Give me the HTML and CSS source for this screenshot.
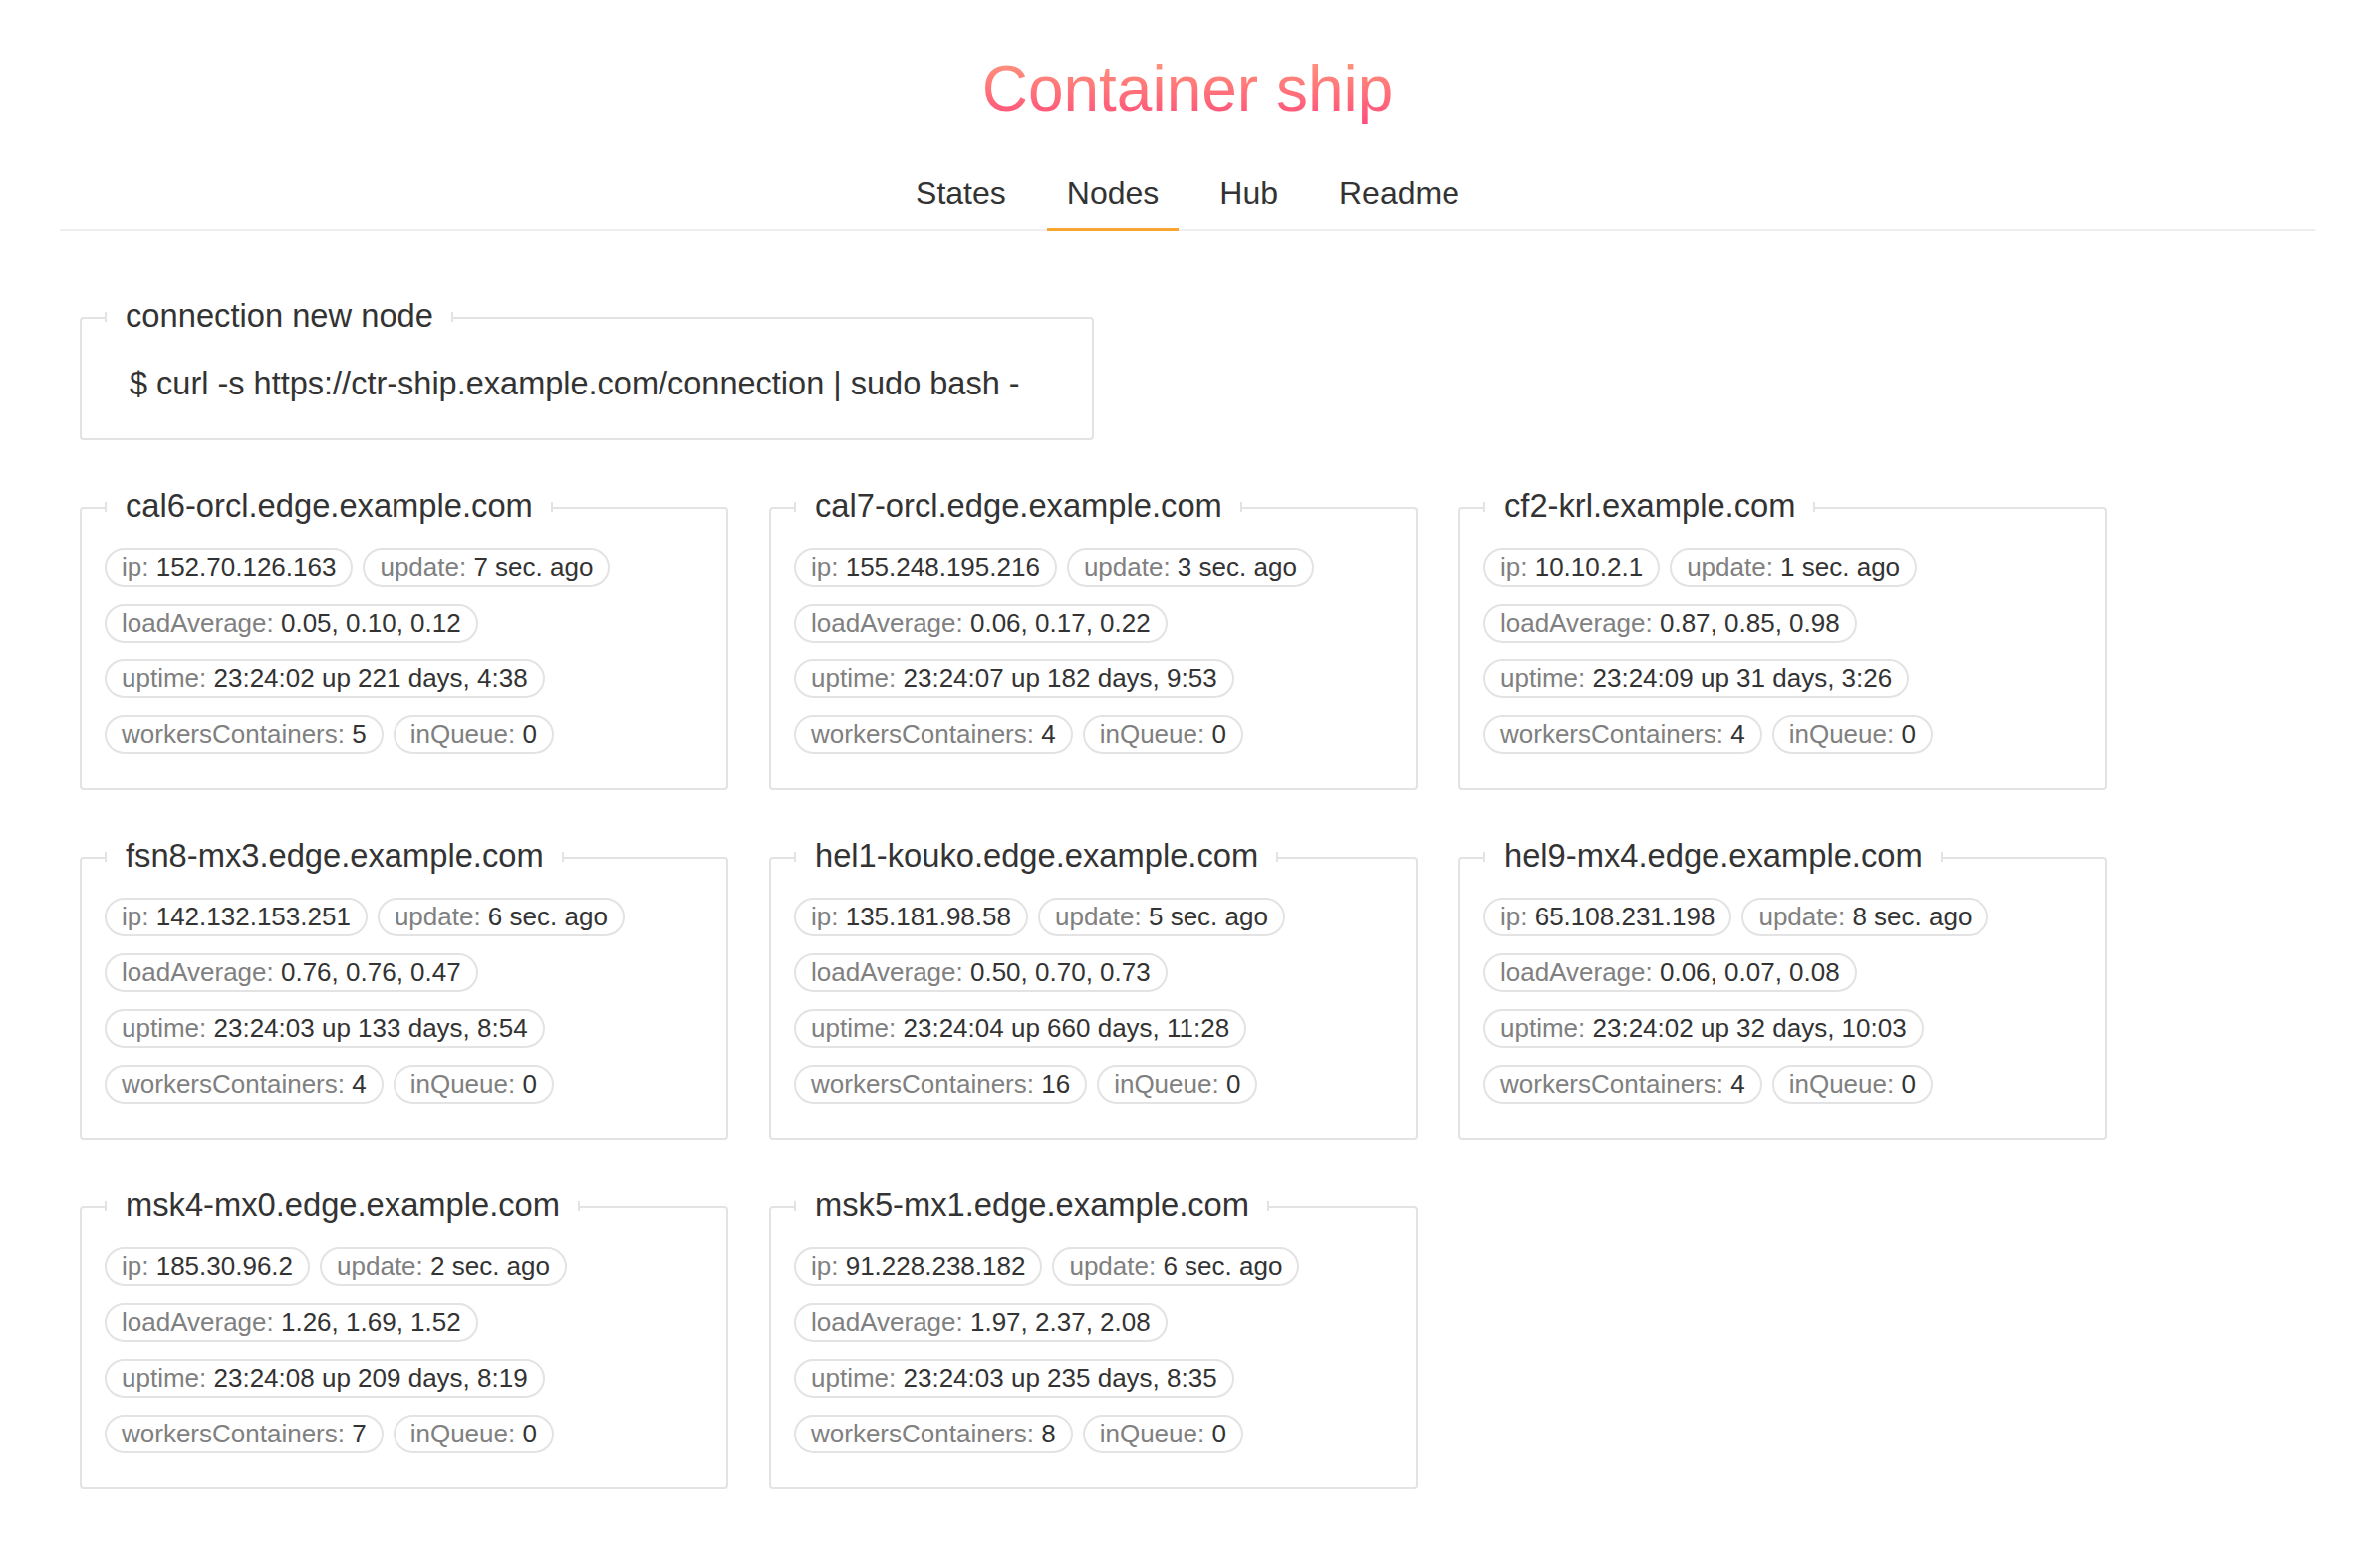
FILE: index.html
```html
<!DOCTYPE html>
<html lang="en">
<head>
<meta charset="utf-8">
<title>Container ship</title>
<link rel="stylesheet" href="styles.css">
</head>
<body>
<header class="header">
  <h1 class="title"><span class="title-text">Container ship</span></h1>
  <nav class="tabs">
    <a class="tab" href="#">States</a>
    <a class="tab tab-active" href="#">Nodes</a>
    <a class="tab" href="#">Hub</a>
    <a class="tab" href="#">Readme</a>
  </nav>
</header>
<main class="main">
  <fieldset class="box connection">
    <legend class="legend">connection new node</legend>
    <p class="command">$ curl -s https://ctr-ship.example.com/connection | sudo bash -</p>
  </fieldset>

  <div class="nodes">
    <fieldset class="box node">
      <legend class="legend">cal6-orcl.edge.example.com</legend>
      <div class="pills">
        <div class="pill-row"><span class="pill"><span class="k">ip:</span> 152.70.126.163</span><span class="pill"><span class="k">update:</span> 7 sec. ago</span></div>
        <div class="pill-row"><span class="pill"><span class="k">loadAverage:</span> 0.05, 0.10, 0.12</span></div>
        <div class="pill-row"><span class="pill"><span class="k">uptime:</span> 23:24:02 up 221 days, 4:38</span></div>
        <div class="pill-row"><span class="pill"><span class="k">workersContainers:</span> 5</span><span class="pill"><span class="k">inQueue:</span> 0</span></div>
      </div>
    </fieldset>
    <fieldset class="box node">
      <legend class="legend">cal7-orcl.edge.example.com</legend>
      <div class="pills">
        <div class="pill-row"><span class="pill"><span class="k">ip:</span> 155.248.195.216</span><span class="pill"><span class="k">update:</span> 3 sec. ago</span></div>
        <div class="pill-row"><span class="pill"><span class="k">loadAverage:</span> 0.06, 0.17, 0.22</span></div>
        <div class="pill-row"><span class="pill"><span class="k">uptime:</span> 23:24:07 up 182 days, 9:53</span></div>
        <div class="pill-row"><span class="pill"><span class="k">workersContainers:</span> 4</span><span class="pill"><span class="k">inQueue:</span> 0</span></div>
      </div>
    </fieldset>
    <fieldset class="box node">
      <legend class="legend">cf2-krl.example.com</legend>
      <div class="pills">
        <div class="pill-row"><span class="pill"><span class="k">ip:</span> 10.10.2.1</span><span class="pill"><span class="k">update:</span> 1 sec. ago</span></div>
        <div class="pill-row"><span class="pill"><span class="k">loadAverage:</span> 0.87, 0.85, 0.98</span></div>
        <div class="pill-row"><span class="pill"><span class="k">uptime:</span> 23:24:09 up 31 days, 3:26</span></div>
        <div class="pill-row"><span class="pill"><span class="k">workersContainers:</span> 4</span><span class="pill"><span class="k">inQueue:</span> 0</span></div>
      </div>
    </fieldset>
    <fieldset class="box node">
      <legend class="legend">fsn8-mx3.edge.example.com</legend>
      <div class="pills">
        <div class="pill-row"><span class="pill"><span class="k">ip:</span> 142.132.153.251</span><span class="pill"><span class="k">update:</span> 6 sec. ago</span></div>
        <div class="pill-row"><span class="pill"><span class="k">loadAverage:</span> 0.76, 0.76, 0.47</span></div>
        <div class="pill-row"><span class="pill"><span class="k">uptime:</span> 23:24:03 up 133 days, 8:54</span></div>
        <div class="pill-row"><span class="pill"><span class="k">workersContainers:</span> 4</span><span class="pill"><span class="k">inQueue:</span> 0</span></div>
      </div>
    </fieldset>
    <fieldset class="box node">
      <legend class="legend">hel1-kouko.edge.example.com</legend>
      <div class="pills">
        <div class="pill-row"><span class="pill"><span class="k">ip:</span> 135.181.98.58</span><span class="pill"><span class="k">update:</span> 5 sec. ago</span></div>
        <div class="pill-row"><span class="pill"><span class="k">loadAverage:</span> 0.50, 0.70, 0.73</span></div>
        <div class="pill-row"><span class="pill"><span class="k">uptime:</span> 23:24:04 up 660 days, 11:28</span></div>
        <div class="pill-row"><span class="pill"><span class="k">workersContainers:</span> 16</span><span class="pill"><span class="k">inQueue:</span> 0</span></div>
      </div>
    </fieldset>
    <fieldset class="box node">
      <legend class="legend">hel9-mx4.edge.example.com</legend>
      <div class="pills">
        <div class="pill-row"><span class="pill"><span class="k">ip:</span> 65.108.231.198</span><span class="pill"><span class="k">update:</span> 8 sec. ago</span></div>
        <div class="pill-row"><span class="pill"><span class="k">loadAverage:</span> 0.06, 0.07, 0.08</span></div>
        <div class="pill-row"><span class="pill"><span class="k">uptime:</span> 23:24:02 up 32 days, 10:03</span></div>
        <div class="pill-row"><span class="pill"><span class="k">workersContainers:</span> 4</span><span class="pill"><span class="k">inQueue:</span> 0</span></div>
      </div>
    </fieldset>
    <fieldset class="box node">
      <legend class="legend">msk4-mx0.edge.example.com</legend>
      <div class="pills">
        <div class="pill-row"><span class="pill"><span class="k">ip:</span> 185.30.96.2</span><span class="pill"><span class="k">update:</span> 2 sec. ago</span></div>
        <div class="pill-row"><span class="pill"><span class="k">loadAverage:</span> 1.26, 1.69, 1.52</span></div>
        <div class="pill-row"><span class="pill"><span class="k">uptime:</span> 23:24:08 up 209 days, 8:19</span></div>
        <div class="pill-row"><span class="pill"><span class="k">workersContainers:</span> 7</span><span class="pill"><span class="k">inQueue:</span> 0</span></div>
      </div>
    </fieldset>
    <fieldset class="box node">
      <legend class="legend">msk5-mx1.edge.example.com</legend>
      <div class="pills">
        <div class="pill-row"><span class="pill"><span class="k">ip:</span> 91.228.238.182</span><span class="pill"><span class="k">update:</span> 6 sec. ago</span></div>
        <div class="pill-row"><span class="pill"><span class="k">loadAverage:</span> 1.97, 2.37, 2.08</span></div>
        <div class="pill-row"><span class="pill"><span class="k">uptime:</span> 23:24:03 up 235 days, 8:35</span></div>
        <div class="pill-row"><span class="pill"><span class="k">workersContainers:</span> 8</span><span class="pill"><span class="k">inQueue:</span> 0</span></div>
      </div>
    </fieldset>
  </div>
</main>
</body>
</html>
```

FILE: styles.css
```css
* { box-sizing: border-box; }

body {
  margin: 0;
  background: #ffffff;
  color: #333333;
  font-family: "Liberation Sans", Arial, Helvetica, sans-serif;
}

.header {
  display: flex;
  flex-direction: column;
}

.title {
  margin: 53px 0 0;
  text-align: center;
  font-size: 64px;
  line-height: 72px;
  font-weight: normal;
}

.title-text {
  display: inline-block;
  background: linear-gradient(to bottom, #ff9d7e 0%, #ff7479 50%, #ff4b7c 100%);
  -webkit-background-clip: text;
  background-clip: text;
  color: transparent;
}

.tabs {
  margin: 51px 60px 0;
  display: flex;
  justify-content: center;
  gap: 21px;
  border-bottom: 2px solid #eeeeee;
}

.tab {
  display: block;
  padding: 0 20px 17px;
  margin-bottom: -2px;
  font-size: 32px;
  line-height: 36px;
  color: #333333;
  text-decoration: none;
  border-bottom: 3px solid transparent;
}

.tab-active {
  border-bottom-color: #f8a633;
}

.main {
  padding: 0 80px 60px;
}

.box {
  margin: 0;
  min-width: 0;
  border: 2px solid #e3e3e3;
  border-radius: 4px;
}

.legend {
  position: relative;
  padding: 0 20px 4px 21px;
  font-size: 32.7px;
  line-height: 37px;
  color: #333333;
}

.legend::before,
.legend::after {
  content: "";
  position: absolute;
  top: 15px;
  width: 2px;
  height: 10px;
  background: #e3e3e3;
}

.legend::before { left: 0; }
.legend::after { right: 0; }

.connection {
  margin-top: 66px;
  width: 1018px;
  padding: 0 23px 36px;
}

.command {
  margin: 28px 0 0;
  padding-left: 25px;
  font-size: 32.5px;
  line-height: 37px;
  color: #333333;
}

.nodes {
  margin-top: 47px;
  display: grid;
  grid-template-columns: repeat(3, 651px);
  column-gap: 41px;
  row-gap: 47px;
}

.node {
  padding: 0 23px 34px;
}

.pills {
  margin-top: 20px;
  display: flex;
  flex-direction: column;
  gap: 17px;
}

.pill-row {
  display: flex;
  gap: 10px;
}

.pill {
  display: inline-block;
  padding: 3px 15px;
  border: 2px solid #e3e3e3;
  border-radius: 20px;
  font-size: 26px;
  line-height: 29px;
  color: #333333;
  white-space: nowrap;
}

.k {
  color: #808080;
}
```
